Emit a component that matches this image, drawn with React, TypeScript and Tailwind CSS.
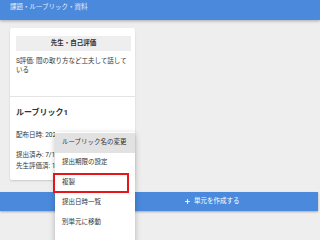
import { Plus } from "lucide-react";

const menuItems = ["ルーブリック名の変更", "提出期限の設定", "複製", "提出日時一覧", "別単元に移動"];

export default function App() {
  return (
    <div className="relative h-[240px] w-[320px] overflow-hidden bg-[#eeeeee] font-['Roboto','Noto_Sans_CJK_JP',sans-serif] text-[#333333]">
      <header className="relative z-10 h-[20px] bg-[#4a89dc] pl-[10px] pt-[3px] shadow-[0_1px_3px_rgba(0,0,0,0.3)]">
        <p className="text-[6.5px] leading-[9px] text-white/85">課題・ルーブリック・資料</p>
      </header>

      <main className="pt-[8px]">
        <section className="ml-[10px] w-[125px] rounded-[2px] bg-white shadow-[0_1px_2px_rgba(0,0,0,0.15)]">
          <div className="pl-[6px] pr-[4px] pt-[8px]">
            <div className="flex h-[15px] items-center justify-center bg-[#eeeeee] text-[6.5px] font-bold">
              先生・自己評価
            </div>
            <p className="mt-[6px] text-[6.5px] leading-[9px]">S評価: 間の取り方など工夫して話している</p>
          </div>
          <div className="mt-[21px] border-t border-[#e4e4e4] px-[6px] pb-[8px] pt-[10px]">
            <h2 className="text-[8px] font-bold leading-[11px]">ルーブリック1</h2>
            <p className="mt-[13px] whitespace-nowrap text-[6.5px] leading-[9px]">配布日時: 2021/07/01 10:00</p>
            <p className="mt-[10px] whitespace-nowrap text-[6.5px] leading-[11px]">提出済み: 7/10</p>
            <p className="whitespace-nowrap text-[6.5px] leading-[11px]">先生評価済: 1/10</p>
          </div>
        </section>

        <button className="mt-[12px] flex h-[19px] w-[318px] items-center bg-[#4a89dc] pl-[184px] text-[6.5px] text-white shadow-[0_1px_2px_rgba(0,0,0,0.3)]">
          <Plus size={7} strokeWidth={3} />
          <span className="ml-[3px]">単元を作成する</span>
        </button>
      </main>

      {/* dropdown menu */}
      <div className="absolute left-[55px] top-[132px] z-20 h-[120px] w-[80px] bg-white pt-[1px] shadow-[0_2px_6px_rgba(0,0,0,0.25)]">
        {menuItems.map((item, i) => (
          <div
            key={item}
            className={`flex h-[20px] items-center pl-[7px] text-[6.5px] ${i === 0 ? "bg-[#e2e2e2]" : ""}`}
          >
            {item}
          </div>
        ))}
        <div className="absolute left-[-2px] top-[41px] h-[20px] w-[76px] border-2 border-[#e8161b]" />
      </div>
    </div>
  );
}
